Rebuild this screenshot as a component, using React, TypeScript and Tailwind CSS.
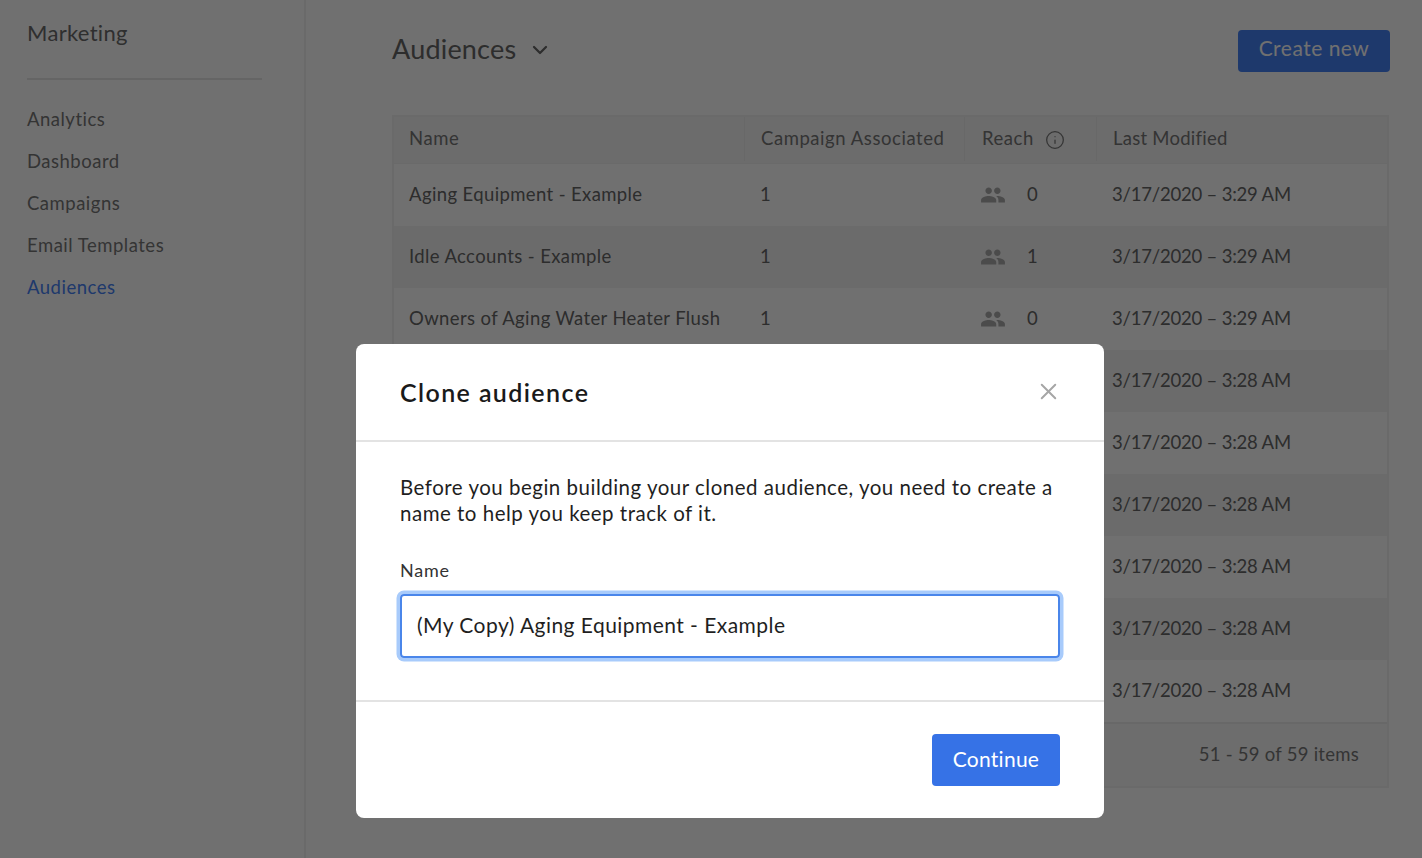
import React from "react";
import { ChevronDown, Info, X } from "lucide-react";
import { MdPeople } from "react-icons/md";

const font = "font-['Lato','Liberation_Sans',sans-serif]";

const navItems = ["Analytics", "Dashboard", "Campaigns", "Email Templates", "Audiences"];

type Row = {
  name?: string;
  campaigns?: string;
  reach?: string;
  modified: string;
};

const rows: Row[] = [
  { name: "Aging Equipment - Example", campaigns: "1", reach: "0", modified: "3/17/2020 – 3:29 AM" },
  { name: "Idle Accounts - Example", campaigns: "1", reach: "1", modified: "3/17/2020 – 3:29 AM" },
  { name: "Owners of Aging Water Heater Flush", campaigns: "1", reach: "0", modified: "3/17/2020 – 3:29 AM" },
  { modified: "3/17/2020 – 3:28 AM" },
  { modified: "3/17/2020 – 3:28 AM" },
  { modified: "3/17/2020 – 3:28 AM" },
  { modified: "3/17/2020 – 3:28 AM" },
  { modified: "3/17/2020 – 3:28 AM" },
  { modified: "3/17/2020 – 3:28 AM" },
];

function Sidebar() {
  return (
    <aside className="w-[306px] shrink-0 border-r-2 border-[#f2f2f2] pl-[27px] pr-[42px]">
      <h2 className="mt-[19px] text-[22px] leading-7 tracking-[0.3px] text-[#6b6b6b]">Marketing</h2>
      <div className="mt-[31px] h-0.5 w-[235px] bg-[#e6e6e6]" />
      <nav className="mt-[18px] flex flex-col">
        {navItems.map((item) => (
          <a
            key={item}
            className={
              item === "Audiences"
                ? "h-[42px] text-[18.5px] leading-[42px] tracking-[0.5px] text-[#4682f5]"
                : "h-[42px] text-[18.5px] leading-[42px] tracking-[0.5px] text-[#777777]"
            }
          >
            {item}
          </a>
        ))}
      </nav>
    </aside>
  );
}

function AudienceTable() {
  return (
    <div className="mt-[43px] w-[997px] border-2 border-[#f2f2f2] text-[18.5px] tracking-[0.38px]">
      <div className="grid h-[47px] grid-cols-[350px_220px_132px_1fr] items-center border-b border-[#f2f2f2] bg-[#f5f5f5] pb-0.5 tracking-[0.55px] text-[#777777]">
        <div className="flex h-full items-center pl-[15px]">Name</div>
        <div className="flex h-full items-center border-l border-[#ededed] pl-4">Campaign Associated</div>
        <div className="flex h-full items-center border-l border-[#ededed] pl-[17px]">
          Reach
          <Info className="ml-[11px] mt-0.5 h-5 w-5 text-[#777777]" strokeWidth={1.5} />
        </div>
        <div className="flex h-full items-center border-l border-[#ededed] pl-4 tracking-[0.25px]">Last Modified</div>
      </div>
      {rows.map((row, i) => (
        <div
          key={i}
          className={
            i % 2 === 0
              ? "grid h-[62px] grid-cols-[350px_220px_132px_1fr] items-center bg-white text-[#666666]"
              : "grid h-[62px] grid-cols-[350px_220px_132px_1fr] items-center bg-[#f4f4f4] text-[#666666]"
          }
        >
          <div className="pl-[15px]">{row.name}</div>
          <div className="pl-4">{row.campaigns}</div>
          <div className="flex items-center pl-4">
            {row.reach && (
              <>
                <MdPeople className="h-[26px] w-[26px] text-[#aaaaaa]" />
                <span className="ml-[21px]">{row.reach}</span>
              </>
            )}
          </div>
          <div className="pl-4 tracking-[-0.2px]">{row.modified}</div>
        </div>
      ))}
      <div className="flex h-16 items-center justify-end border-t-2 border-[#ededed] bg-[#f7f7f7] pr-7 tracking-[0.26px] text-[#777777]">
        51 - 59 of 59 items
      </div>
    </div>
  );
}

function CloneModal() {
  return (
    <div className="absolute inset-0 flex items-end justify-center bg-black/56 pb-10 pl-[38px]">
      <div className="h-[474px] w-[748px] rounded-lg bg-white">
        <div className="flex h-[98px] items-center justify-between border-b-2 border-[#e3e3e3] pl-11 pr-[42px]">
          <h3 className="mt-0.5 text-[25px] font-semibold tracking-[1.4px] text-[#1a1a1a]">Clone audience</h3>
          <X className="mb-0.5 h-[27px] w-[27px] text-[#a6a6a6]" strokeWidth={1.75} />
        </div>
        <div className="h-[260px] border-b-2 border-[#e3e3e3] px-11 pt-8">
          <p className="text-[20.5px] leading-[26px] tracking-[0.5px] text-[#1f1f1f]">
            Before you begin building your cloned audience, you need to create a name to help you keep track of it.
          </p>
          <label className="mt-8 block text-[18px] leading-6 tracking-[0.75px] text-[#333333]">Name</label>
          <div className="mt-3 flex h-16 items-center rounded border-2 border-[#4a86ea] pb-0.5 pl-[15px] text-[21px] tracking-[0.45px] text-[#1f1f1f] shadow-[0_0_0_3.5px_#a8cbfb]">
            (My Copy) Aging Equipment - Example
          </div>
        </div>
        <div className="flex justify-end pr-[44px] pt-8">
          <button className="h-[52px] w-32 rounded bg-[#3672e6] pb-0.5 text-[21px] tracking-[0.25px] text-white">Continue</button>
        </div>
      </div>
    </div>
  );
}

export default function App() {
  return (
    <div className={`relative flex h-[858px] overflow-hidden bg-white ${font}`}>
      <Sidebar />
      <main className="flex-1 pl-[86px] pr-8">
        <div className="mt-[30px] flex items-start justify-between">
          <div className="flex h-[38px] items-center text-[#666666]">
            <h1 className="text-[27px] tracking-[0.2px]">Audiences</h1>
            <ChevronDown className="ml-[12px] mt-0.5 h-6 w-6" strokeWidth={2.25} />
          </div>
          <button className="h-[42px] w-[152px] rounded bg-[#4682f5] pb-1.5 text-[21px] tracking-[0.5px] text-white">Create new</button>
        </div>
        <AudienceTable />
      </main>
      <CloneModal />
    </div>
  );
}
